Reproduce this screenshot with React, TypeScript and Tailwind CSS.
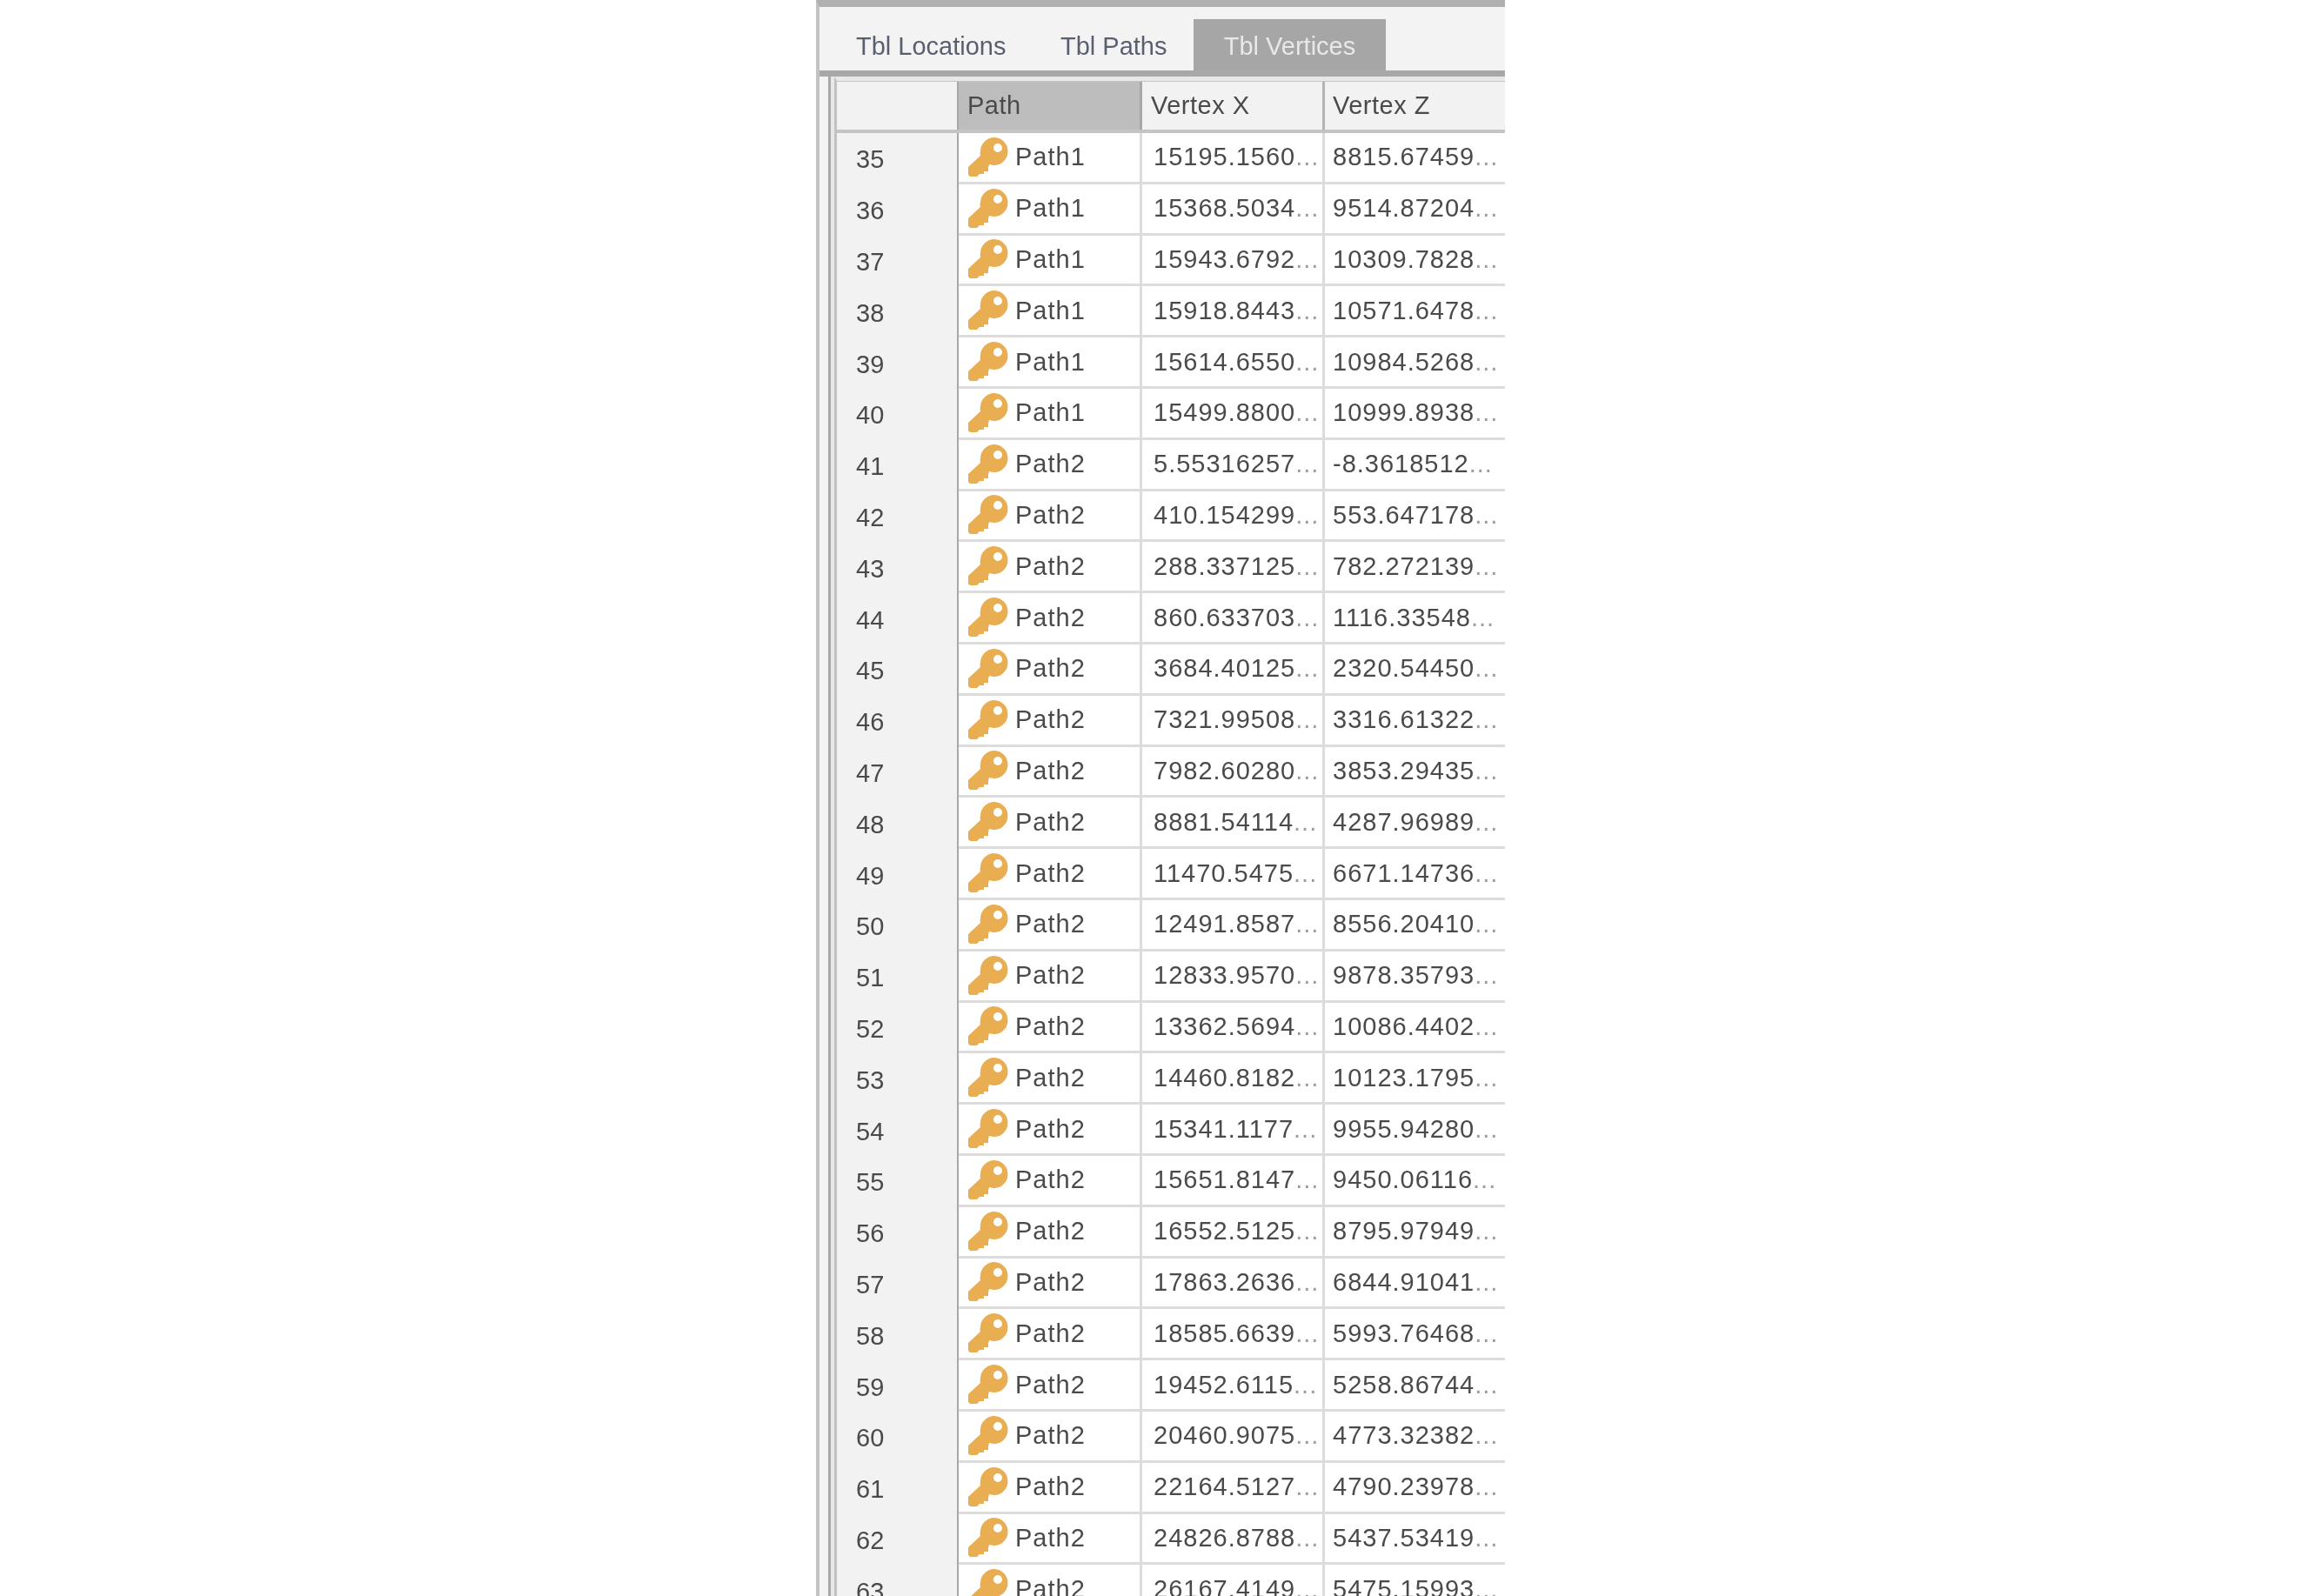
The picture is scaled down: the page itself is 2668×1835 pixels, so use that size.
const rows: [number, string, string, string][] = [
  [35, "Path1", "15195.1560", "8815.67459"],
  [36, "Path1", "15368.5034", "9514.87204"],
  [37, "Path1", "15943.6792", "10309.7828"],
  [38, "Path1", "15918.8443", "10571.6478"],
  [39, "Path1", "15614.6550", "10984.5268"],
  [40, "Path1", "15499.8800", "10999.8938"],
  [41, "Path2", "5.55316257", "-8.3618512"],
  [42, "Path2", "410.154299", "553.647178"],
  [43, "Path2", "288.337125", "782.272139"],
  [44, "Path2", "860.633703", "1116.33548"],
  [45, "Path2", "3684.40125", "2320.54450"],
  [46, "Path2", "7321.99508", "3316.61322"],
  [47, "Path2", "7982.60280", "3853.29435"],
  [48, "Path2", "8881.54114", "4287.96989"],
  [49, "Path2", "11470.5475", "6671.14736"],
  [50, "Path2", "12491.8587", "8556.20410"],
  [51, "Path2", "12833.9570", "9878.35793"],
  [52, "Path2", "13362.5694", "10086.4402"],
  [53, "Path2", "14460.8182", "10123.1795"],
  [54, "Path2", "15341.1177", "9955.94280"],
  [55, "Path2", "15651.8147", "9450.06116"],
  [56, "Path2", "16552.5125", "8795.97949"],
  [57, "Path2", "17863.2636", "6844.91041"],
  [58, "Path2", "18585.6639", "5993.76468"],
  [59, "Path2", "19452.6115", "5258.86744"],
  [60, "Path2", "20460.9075", "4773.32382"],
  [61, "Path2", "22164.5127", "4790.23978"],
  [62, "Path2", "24826.8788", "5437.53419"],
  [63, "Path2", "26167.4149", "5475.15993"],
];

function Key() {
  return (
    <svg width="46" height="46" viewBox="0 0 46 46" className="shrink-0" aria-hidden="true">
      <path
        fill="#e9ad52"
        fillRule="evenodd"
        d="M30 0a16 16 0 1 1-1 32l-5-1-1 4v4h-5v3h-5l-3 3H2L0 43V34L14 21Q13 18 14 16A16 16 0 0 1 30 0ZM34 7a5 5 0 1 0 0 10a5 5 0 0 0 0-10Z"
      />
    </svg>
  );
}

function Val({ v }: { v: string }) {
  return (
    <span className="whitespace-nowrap tracking-[1px]">
      {v}
      <span className="tracking-[1px] text-[#a09aa0]">...</span>
    </span>
  );
}

export default function App() {
  return (
    <div className="h-screen overflow-hidden bg-white font-['Liberation_Sans',sans-serif] text-[29px] leading-none text-[#4a4a4a]">
      <div className="ml-[938px] flex h-full w-[792px] flex-col overflow-hidden border-l-4 border-t-[8px] border-l-[#c2c2c2] border-t-[#b0b0b0] bg-[#f3f3f3] blur-[0.6px]">
        <div className="flex h-[80px] shrink-0 items-end border-b-[7px] border-[#a8a8a8]">
          <div className="flex h-[59px] w-[242px] items-center pl-[42px] pt-[3px] text-[#5a5f70]">Tbl Locations</div>
          <div className="flex h-[59px] w-[188px] items-center pl-[35px] pt-[3px] text-[#5a5f70]">Tbl Paths</div>
          <div className="flex h-[59px] w-[221px] items-center justify-center bg-[#a6a6a6] pt-[3px] text-[#e8e8e8]">Tbl Vertices</div>
        </div>
        <div className="ml-[10px] flex min-h-0 flex-1 flex-col overflow-hidden border-l-[3px] border-l-[#a8a8a8] bg-[#e8e8e8] pl-1">
          <div className="flex min-h-0 flex-1 flex-col overflow-hidden border-l-[3px] border-t-[5px] border-l-[#c2c2c2] border-t-[#e8e8e8] bg-white">
            <div className="flex h-[60px] shrink-0 border-b-4 border-t border-b-[#c4c4c4] border-t-[#c4c4c4] bg-[#f2f2f2] tracking-[0.5px]">
              <div className="w-[140px] shrink-0 border-r-2 border-[#a8a8a8]" />
              <div className="flex w-[211px] shrink-0 items-center border-r-[3px] border-[#a8a8a8] bg-[#bdbdbd] pl-[10px]">Path</div>
              <div className="flex w-[210px] shrink-0 items-center border-r-[3px] border-[#b4b4b4] pl-[10px]">Vertex X</div>
              <div className="flex flex-1 items-center pl-[9px]">Vertex Z</div>
            </div>
            {rows.map(([n, p, x, z]) => (
              <div key={n} className="flex h-[58.8px] shrink-0 border-b-[3px] border-[#dcdcdc]">
                <div className="-mb-[3px] flex w-[140px] shrink-0 items-center border-r-2 border-[#a8a8a8] bg-[#f2f2f2] pl-[22px] pt-[3px]">{n}</div>
                <div className="flex w-[211px] shrink-0 items-center gap-2 overflow-hidden border-r-[3px] border-[#dcdcdc] pl-[11px]">
                  <Key />
                  <span className="tracking-[1px]">{p}</span>
                </div>
                <div className="flex w-[210px] shrink-0 items-center overflow-hidden border-r-[3px] border-[#dcdcdc] pl-[13px]">
                  <Val v={x} />
                </div>
                <div className="flex flex-1 items-center overflow-hidden pl-[9px]">
                  <Val v={z} />
                </div>
              </div>
            ))}
          </div>
        </div>
      </div>
    </div>
  );
}
